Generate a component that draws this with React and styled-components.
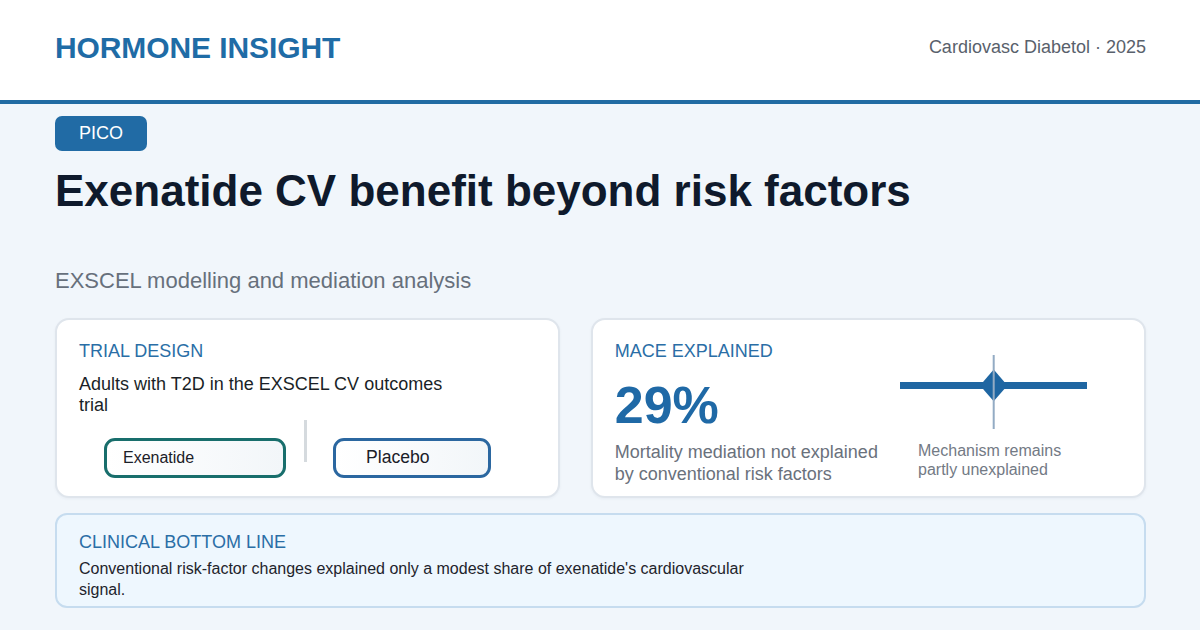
import styled, { createGlobalStyle } from "styled-components";

const GlobalStyle = createGlobalStyle`
  html, body {
    margin: 0;
    padding: 0;
    background: #f1f6fb;
  }
  body {
    font-family: "Liberation Sans", Arial, sans-serif;
  }
  * {
    box-sizing: border-box;
  }
`;

const Page = styled.div`
  width: 1200px;
  height: 630px;
  overflow: hidden;
  background: #f1f6fb;
`;

const Header = styled.header`
  height: 104px;
  display: flex;
  align-items: center;
  justify-content: space-between;
  padding: 0 54px 5px 55px;
  background: #ffffff;
  border-bottom: 4px solid #216ba3;
`;

const Brand = styled.div`
  font-size: 30px;
  font-weight: 700;
  color: #1f6ca6;
  letter-spacing: -0.1px;
`;

const Source = styled.div`
  font-size: 18px;
  color: #59616c;
`;

const Main = styled.main`
  display: flex;
  flex-direction: column;
  padding: 12px 54px 0 55px;
`;

const Badge = styled.div`
  align-self: flex-start;
  height: 35px;
  line-height: 35px;
  padding: 0 24px;
  border-radius: 7px;
  background: #216ba5;
  color: #ffffff;
  font-size: 18px;
`;

const Title = styled.h1`
  margin: 15px 0 0;
  font-size: 44px;
  line-height: 1.15;
  font-weight: 700;
  color: #0f1a2c;
`;

const Subtitle = styled.p`
  margin: 50px 0 0;
  font-size: 22px;
  line-height: 1.3;
  color: #67707c;
`;

const CardGrid = styled.div`
  display: grid;
  grid-template-columns: 1fr 1.1fr;
  gap: 31px;
  margin-top: 23px;
`;

const Card = styled.section`
  display: ${(p) => (p.$split ? "flex" : "block")};
  padding: 21px 22px ${(p) => (p.$split ? "6px" : "18px")};
  background: #ffffff;
  border: 2px solid #dfe5ec;
  border-radius: 14px;
  box-shadow: 0 1px 3px rgba(30, 60, 90, 0.05);
`;

const Label = styled.div`
  font-size: 18px;
  line-height: 1.2;
  color: #2a6ea6;
`;

const Body = styled.p`
  margin: 11px 0 0;
  max-width: 380px;
  font-size: 18px;
  line-height: 1.2;
  color: #1a1f27;
`;

const ArmRow = styled.div`
  display: flex;
  align-items: flex-start;
  margin-top: 3px;
  padding-left: 25px;
`;

const Arm = styled.div`
  display: flex;
  align-items: center;
  width: ${(p) => p.$width}px;
  height: 40px;
  margin-top: 18px;
  padding-left: ${(p) => p.$pad}px;
  border: 3px solid ${(p) => (p.$tone === "teal" ? "#186e6c" : "#2b67a0")};
  border-radius: 11px;
  background: linear-gradient(90deg, #ffffff, #f2f6f9);
  font-size: ${(p) => p.$size}px;
  color: #1b2028;
`;

const Divider = styled.div`
  width: 3px;
  height: 42px;
  margin: 0 26px 0 18px;
  background: #d5dade;
`;

const StatCol = styled.div`
  flex: 1;
`;

const Stat = styled.div`
  margin-top: 16px;
  font-size: 52px;
  line-height: 1;
  font-weight: 700;
  color: #1f69a6;
`;

const StatText = styled.p`
  margin: 11px 0 0;
  font-size: 18px;
  line-height: 1.22;
  color: #6a717c;
`;

const PlotCol = styled.div`
  flex: 0 0 222px;
  padding-top: 14px;
`;

const Caption = styled.p`
  margin: 9px 0 0 18px;
  font-size: 16px;
  line-height: 1.15;
  color: #737a85;
`;

const BottomLine = styled.section`
  margin-top: 15px;
  padding: 17px 22px 5px;
  background: #eef7fe;
  border: 2px solid #c6dcef;
  border-radius: 12px;
`;

const BottomText = styled.p`
  margin: 4px 0 0;
  max-width: 690px;
  font-size: 16px;
  line-height: 1.36;
  color: #1e242c;
`;

function MediationPlot() {
  return (
    <svg width="188" height="74" viewBox="0 0 188 74">
      <rect x="0" y="27" width="187" height="7" fill="#1f66a2" />
      <polygon points="80,30.5 93.7,14.5 107.4,30.5 93.7,46.2" fill="#1f66a2" />
      <rect x="92.7" y="0" width="2" height="74" fill="#93abc4" />
    </svg>
  );
}

export default function App() {
  return (
    <Page>
      <GlobalStyle />
      <Header>
        <Brand>HORMONE INSIGHT</Brand>
        <Source>Cardiovasc Diabetol · 2025</Source>
      </Header>
      <Main>
        <Badge>PICO</Badge>
        <Title>Exenatide CV benefit beyond risk factors</Title>
        <Subtitle>EXSCEL modelling and mediation analysis</Subtitle>
        <CardGrid>
          <Card>
            <Label>TRIAL DESIGN</Label>
            <Body>Adults with T2D in the EXSCEL CV outcomes trial</Body>
            <ArmRow>
              <Arm $tone="teal" $width={182} $pad={16} $size={16}>
                Exenatide
              </Arm>
              <Divider />
              <Arm $tone="blue" $width={158} $pad={30} $size={17.6}>
                Placebo
              </Arm>
            </ArmRow>
          </Card>
          <Card $split>
            <StatCol>
              <Label>MACE EXPLAINED</Label>
              <Stat>29%</Stat>
              <StatText>
                Mortality mediation not explained
                <br />
                by conventional risk factors
              </StatText>
            </StatCol>
            <PlotCol>
              <MediationPlot />
              <Caption>
                Mechanism remains
                <br />
                partly unexplained
              </Caption>
            </PlotCol>
          </Card>
        </CardGrid>
        <BottomLine>
          <Label>CLINICAL BOTTOM LINE</Label>
          <BottomText>
            Conventional risk-factor changes explained only a modest share of exenatide's
            cardiovascular signal.
          </BottomText>
        </BottomLine>
      </Main>
    </Page>
  );
}
